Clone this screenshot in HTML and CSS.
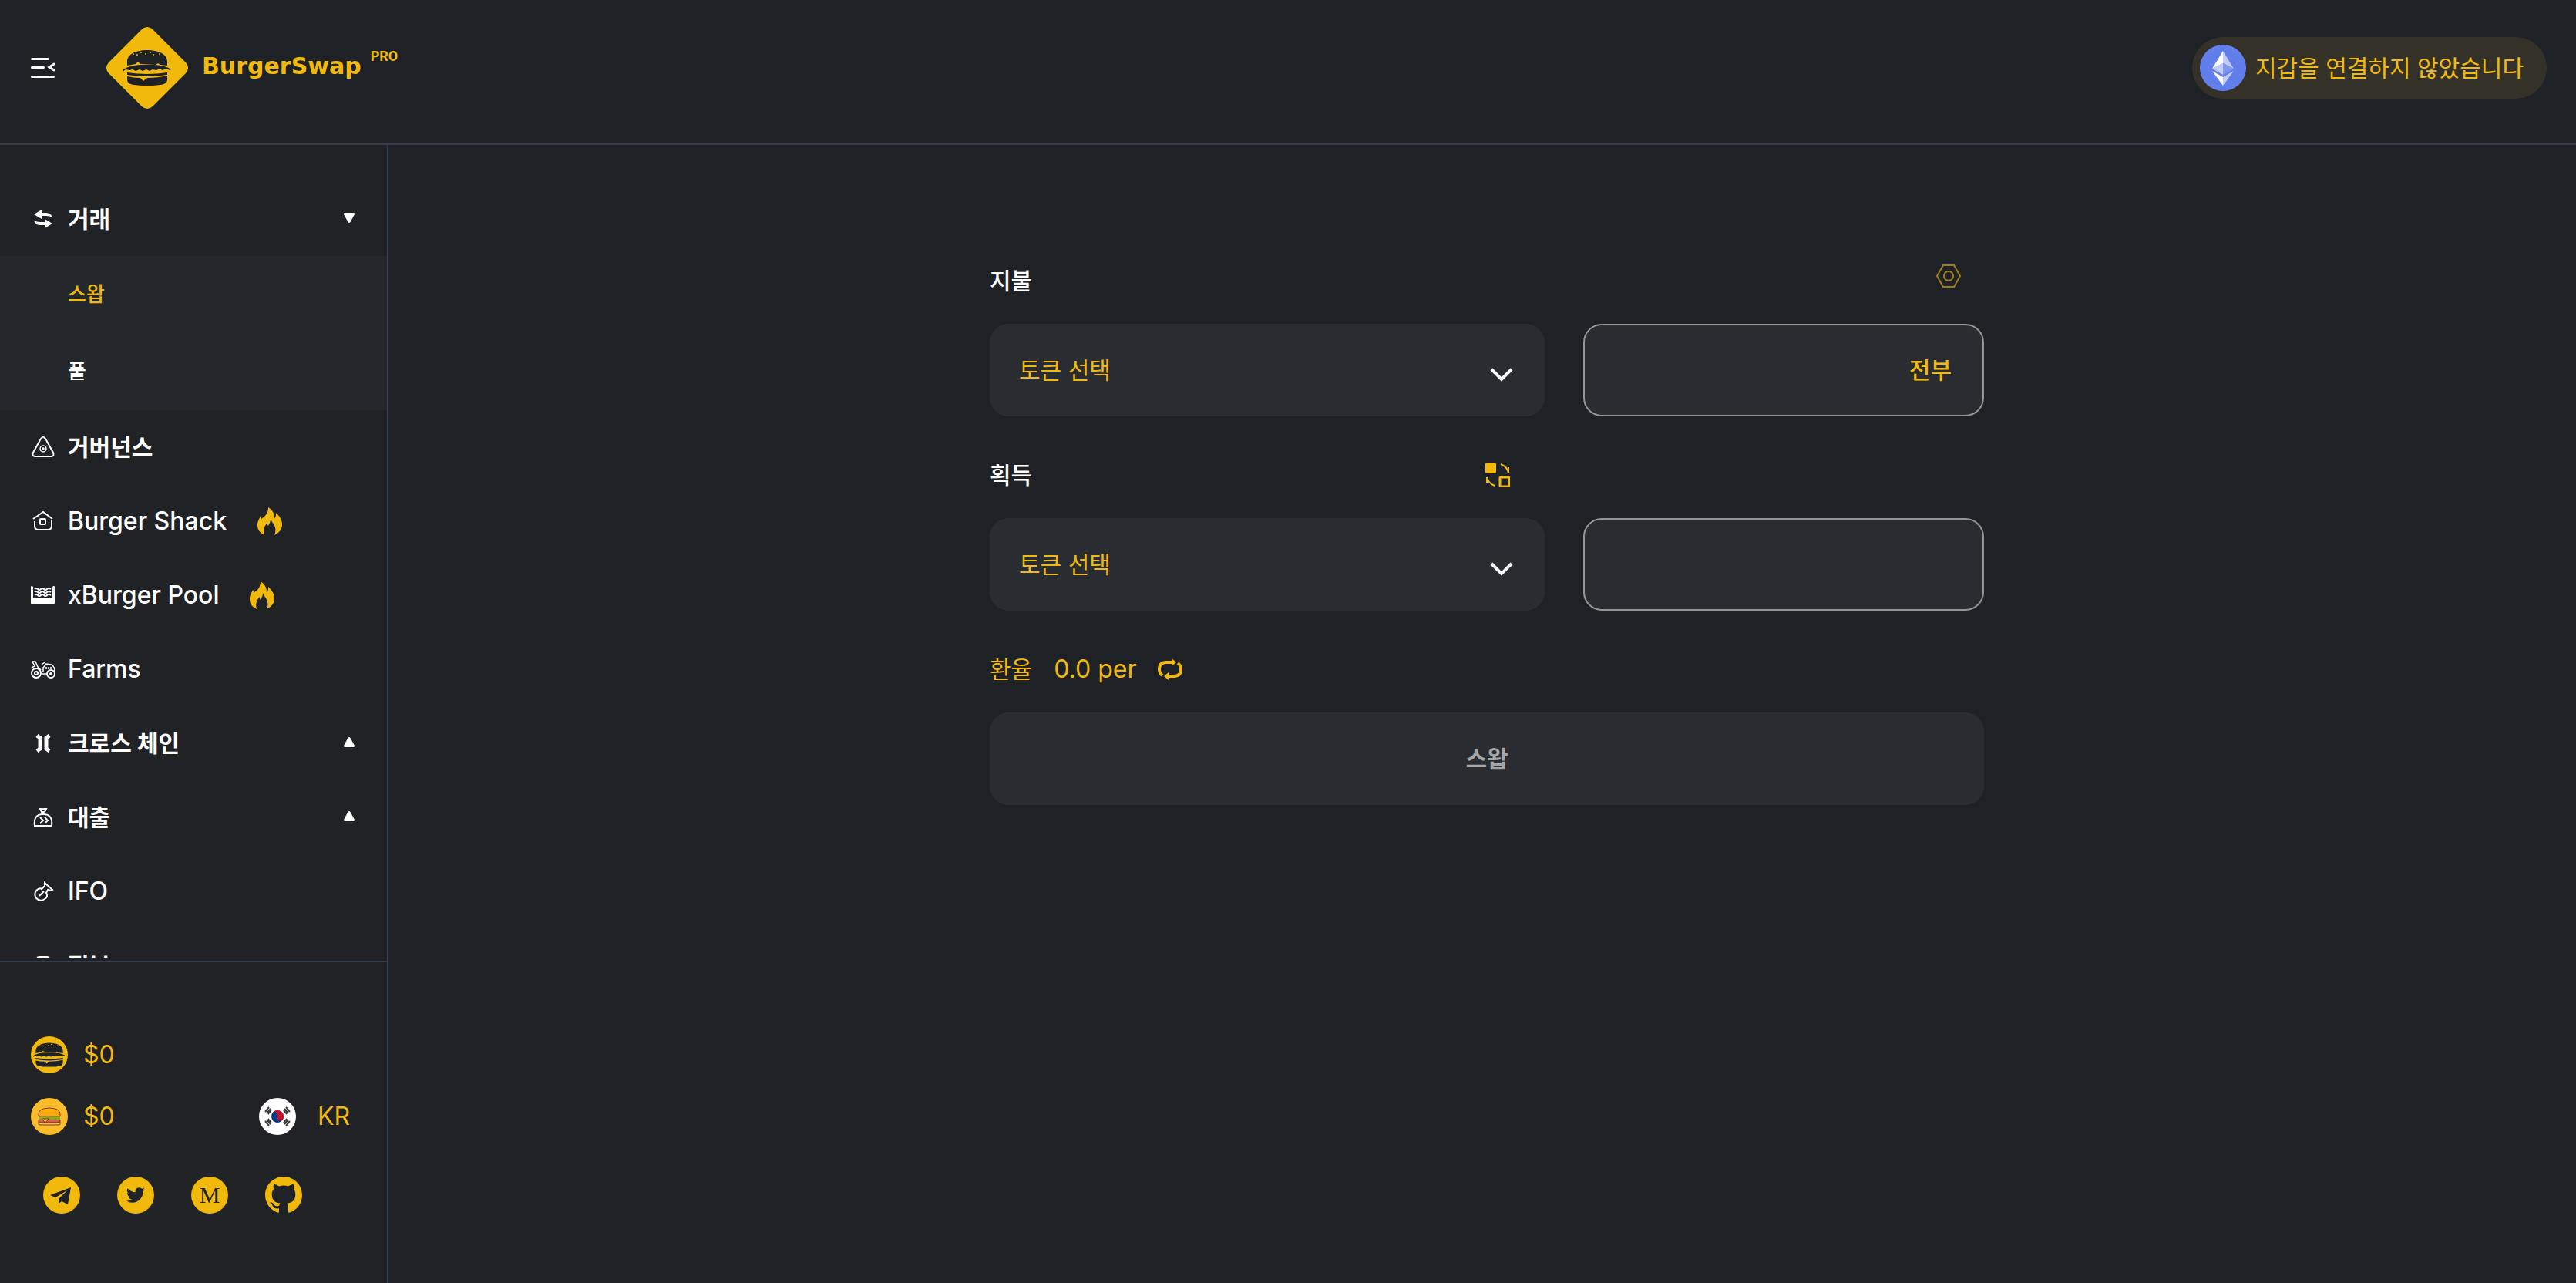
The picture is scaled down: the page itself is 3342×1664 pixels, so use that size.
FILE: index.html
```
<!DOCTYPE html>
<html lang="ko">

<head>
    <meta charset="UTF-8">
    <meta name="viewport" content="width=device-width, initial-scale=1.0">
    <title>BurgerSwap</title>
    <link rel="stylesheet" href="styles.css">
</head>

<body>
    <!-- 공용 심볼 -->
    <svg class="symbols" aria-hidden="true">
        <symbol id="burger" viewBox="0 0 62 46">
            <path d="M5 20V15C5 5 17 0 31 0s26 5 26 15v5l-9-1-3-2-3 2-20-1-3-3-3 3z" />
            <path d="M0 25c10-6 20-6 31-6s22 0 31 6l-2 1-4-2-5 2-4-2-4 2-5-1-4 2-4-2-5 2-4-2-5 2-4-2-4 1-5-1-4 3z" />
            <path d="M5 29q26 4 52 0v3q-26 4-52 0z" />
            <path d="M5 34q8 2 17 2l4 4 5-4q14 0 26-3v5c0 6-6 8-26 8S5 44 5 38z" />
            <g class="seeds">
                <circle cx="13" cy="5" r="1" />
                <circle cx="18" cy="6" r="1" />
                <circle cx="23" cy="3" r="1" />
                <circle cx="29" cy="5" r="1" />
                <circle cx="35" cy="3" r="1" />
                <circle cx="39" cy="6" r="1" />
                <circle cx="47" cy="5" r="1" />
            </g>
        </symbol>
        <symbol id="fire" viewBox="0 0 32 36">
            <path d="M14 0c6 4 8 8 8 14 2-1 2-4 2-7 5 5 8 9 8 15 0 7-4 11-10 14 3-7 1-12-3-17l-2-4c0 4-1 5-3 9-1-1-1-2-1-4-4 4-6 9-4 16C3 33 0 29 0 23c0-5 2-7 4-12 1 1 1 2 1 4C11 11 14 7 14 0z" />
        </symbol>
        <symbol id="arrow" viewBox="0 0 14 13">
            <path d="M1 0h12q1 0 1 2L8.500 12q-1.500 2-3 0L0 2Q0 0 1 0z" />
        </symbol>
        <symbol id="chevron" viewBox="0 0 30 18">
            <path d="M2 2l13 13L28 2" />
        </symbol>
    </svg>

    <header class="header">
        <button class="fold" aria-label="메뉴 접기">
            <svg viewBox="0 0 32 28" width="32" height="28">
                <path d="M1.500 2.500h21M1.500 13.500h15M1.500 25.500h28M30 9l-6 4 6 4" />
            </svg>
        </button>
        <a class="logo" href="#">
            <svg viewBox="0 0 106 106" width="106" height="106">
                <path class="diamond" d="M46 3q7-6 14 0l43 43q6 7 0 14l-43 43q-7 6-14 0L3 60q-6-7 0-14z" />
                <use href="#burger" x="22" y="30" width="62" height="46" />
            </svg>
            <span class="name">BurgerSwap</span>
            <sup class="pro">PRO</sup>
        </a>
        <button class="wallet">
            <svg viewBox="0 0 60 60" width="60" height="60">
                <circle cx="30" cy="30" r="30" fill="#627eea" />
                <path d="M30 8L16 31l14-7z" fill="#fff" />
                <path d="M30 8l14 23-14-7z" fill="#c1ccf7" />
                <path d="M16 31l14-7v15z" fill="#c1ccf7" />
                <path d="M44 31l-14-7v15z" fill="#8298ee" />
                <path d="M16 34l14 8v11z" fill="#fff" />
                <path d="M44 34l-14 8v11z" fill="#c1ccf7" />
            </svg>
            <span>지갑을 연결하지 않았습니다</span>
        </button>
    </header>

    <div class="container">
        <aside class="sidebar">
            <nav class="menu">
                <ul>
                    <li>
                        <a class="item" href="#">
                            <svg class="icon solid" viewBox="0 0 32 32">
                                <path d="M4 10l10-6v4h6q6 0 8 6-4-2-8-2h-6v4zM28 22l-10 6v-4h-6q-6 0-8-6 4 2 8 2h6v-4z" />
                            </svg>
                            <span>거래</span>
                            <svg class="arrow"><use href="#arrow" /></svg>
                        </a>
                        <ul class="sub">
                            <li class="current"><a href="#">스왑</a></li>
                            <li><a href="#">풀</a></li>
                        </ul>
                    </li>
                    <li>
                        <a class="item" href="#">
                            <svg class="icon" viewBox="0 0 32 32">
                                <path d="M13 5q3-4 6 0l10 18q2 5-3 5H6q-5 0-3-5z" />
                                <circle class="thin" cx="16" cy="18" r="4" />
                                <circle class="thin" cx="16" cy="18" r="1" />
                            </svg>
                            <span>거버넌스</span>
                        </a>
                    </li>
                    <li>
                        <a class="item en" href="#">
                            <svg class="icon" viewBox="0 0 32 32">
                                <path d="M3 13l13-9 12 9M5 16v6q0 5 5 5h12q5 0 5-5v-8" />
                                <rect x="12" y="13" width="7" height="7" rx="1" />
                            </svg>
                            <span>Burger Shack</span>
                            <svg class="fire"><use href="#fire" /></svg>
                        </a>
                    </li>
                    <li>
                        <a class="item en" href="#">
                            <svg class="icon" viewBox="0 0 32 32">
                                <path class="solid" d="M0 5q0-1 1-1t2 1v15h25V5q1-1 2-1t1 1v21q0 2-1 2H1q-1 0-1-2z" />
                                <path d="M5 8q2-2 4 0t4 0 4 0 4 0 5 0M5 12q2-2 4 0t4 0 4 0 4 0 5 0M5 16q2-2 4 0t4 0 4 0 4 0 5 0" />
                            </svg>
                            <span>xBurger Pool</span>
                            <svg class="fire"><use href="#fire" /></svg>
                        </a>
                    </li>
                    <li>
                        <a class="item en" href="#">
                            <svg class="icon" viewBox="0 0 32 32">
                                <circle cx="7" cy="21" r="6" />
                                <circle cx="7" cy="21" r="2" />
                                <circle cx="26" cy="22" r="5" />
                                <circle cx="26" cy="22" r="1" />
                                <path class="thin" d="M1 14l4-2-3-6h4l3 7 4 4M14 10l4-3M16 19v-5l4-5 7 1q4 3 4 9M14 22h7M20 13v3M23 13v3M26 13v3" />
                            </svg>
                            <span>Farms</span>
                        </a>
                    </li>
                    <li>
                        <a class="item" href="#">
                            <svg class="icon thick" viewBox="0 0 32 32">
                                <path d="M8 6l4 3v14l-4 3M24 6l-4 3v14l4 3" />
                            </svg>
                            <span>크로스 체인</span>
                            <svg class="arrow up"><use href="#arrow" /></svg>
                        </a>
                    </li>
                    <li>
                        <a class="item" href="#">
                            <svg class="icon" viewBox="0 0 32 32">
                                <path d="M12 5h8l-2 4h-4zM5 27q-2-15 11-15t11 15zM12 16l4 4-4 4M18 16l4 4-4 4" />
                            </svg>
                            <span>대출</span>
                            <svg class="arrow up"><use href="#arrow" /></svg>
                        </a>
                    </li>
                    <li>
                        <a class="item en" href="#">
                            <svg class="icon" viewBox="0 0 32 32">
                                <path d="M18 5l10 9-2 1-4-1-2 4q3 5-2 8-6 4-11-1-4-6 1-11 4-3 6-1l4-4zM11 22l6-6" />
                            </svg>
                            <span>IFO</span>
                        </a>
                    </li>
                    <li>
                        <a class="item" href="#">
                            <svg class="icon" viewBox="0 0 32 32">
                                <rect x="8" y="5" width="16" height="22" rx="3" />
                            </svg>
                            <span>정보</span>
                        </a>
                    </li>
                </ul>
            </nav>

            <div class="info">
                <div class="price">
                    <svg viewBox="0 0 48 48" width="48" height="48">
                        <circle class="gold" cx="24" cy="24" r="24" />
                        <use href="#burger" x="3" y="8" width="42" height="32" />
                    </svg>
                    <span>$0</span>
                </div>
                <div class="price">
                    <svg viewBox="0 0 48 48" width="48" height="48">
                        <circle cx="24" cy="24" r="24" fill="#fbbd2c" />
                        <g stroke="#7a3d10">
                            <path d="M10 24q-2-11 14-11t14 11z" fill="#fbab10" />
                            <path d="M10 28h28v4H10z" fill="#e2574c" />
                            <path d="M10 32h28q1 3-2 3H12q-3 0-2-3z" fill="#fbbd5c" />
                        </g>
                        <path d="M10 25h28v2l-3 2-3-2-4 1-4-1-4 1-5-1-3 1z" fill="#7cb518" />
                        <path d="M14 27h9l-4 5z" fill="#fdc23e" stroke="#7a3d10" />
                    </svg>
                    <span>$0</span>
                    <button class="lang">
                        <svg viewBox="0 0 48 48" width="48" height="48">
                            <circle cx="24" cy="24" r="24" fill="#fff" />
                            <g transform="rotate(20 24 24)">
                                <circle cx="24" cy="24" r="8" fill="#0b3b80" />
                                <path d="M16 24a8 8 0 0 1 16 0a4 4 0 0 1-8 0a4 4 0 0 0-8 0z" fill="#c8102e" />
                            </g>
                            <g stroke="#3c3c3c" stroke-width="2">
                                <path d="M8 18l5-6M10 20l5-6M12 21l4-6" />
                                <path d="M33 14l5 6M35 12l5 6M32 16l4 5" />
                                <path d="M8 30l5 6M10 28l5 6M12 27l4 6" />
                                <path d="M40 30l-5 6M38 28l-5 6M36 27l-4 5" />
                            </g>
                        </svg>
                        <span>KR</span>
                    </button>
                </div>
                <div class="links">
                    <a href="#" aria-label="Telegram">
                        <svg viewBox="0 0 48 48" width="48" height="48">
                            <circle class="gold" cx="24" cy="24" r="24" />
                            <path class="dark" d="M36 14L9 24l7 3 15-9-11 11v6l4-3 8 4z" />
                        </svg>
                    </a>
                    <a href="#" aria-label="Twitter">
                        <svg viewBox="0 0 48 48" width="48" height="48">
                            <circle class="gold" cx="24" cy="24" r="24" />
                            <path class="dark" transform="translate(12 12)" d="M23.950 4.570a10 10 0 0 1-2.820.770 4.960 4.960 0 0 0 2.160-2.720c-.95.550-2 .95-3.130 1.180a4.920 4.920 0 0 0-8.380 4.480C7.690 8.090 4.070 6.130 1.640 3.160a4.920 4.920 0 0 0 1.520 6.570 4.900 4.900 0 0 1-2.230-.61v.06a4.920 4.920 0 0 0 3.950 4.830 5 5 0 0 1-2.210.08 4.940 4.940 0 0 0 4.600 3.420A9.870 9.870 0 0 1 0 19.540a14 14 0 0 0 7.550 2.210c9.050 0 14-7.500 14-13.980l-.02-.63a9.940 9.940 0 0 0 2.420-2.570z" />
                        </svg>
                    </a>
                    <a class="medium" href="#" aria-label="Medium">M</a>
                    <a href="#" aria-label="GitHub">
                        <svg class="gold" viewBox="0 0 24 24" width="48" height="48">
                            <path d="M12 0C5.370 0 0 5.370 0 12c0 5.310 3.440 9.800 8.210 11.390.6.110.79-.26.79-.58v-2.230c-3.340.73-4.030-1.420-4.030-1.420-.55-1.390-1.330-1.760-1.330-1.760-1.090-.74.08-.73.08-.73 1.210.09 1.840 1.240 1.840 1.240 1.070 1.830 2.810 1.300 3.500 1 .1-.78.420-1.310.76-1.610-2.670-.3-5.470-1.330-5.470-5.930 0-1.310.47-2.380 1.240-3.220-.14-.3-.54-1.520.1-3.180 0 0 1.010-.32 3.300 1.230a11.500 11.500 0 0 1 6.020 0c2.280-1.550 3.290-1.230 3.290-1.230.64 1.660.24 2.880.12 3.180.77.84 1.230 1.910 1.230 3.220 0 4.610-2.800 5.630-5.480 5.920.42.360.81 1.100.81 2.220v3.290c0 .32.190.69.800.58A12 12 0 0 0 24 12c0-6.630-5.370-12-12-12z" />
                        </svg>
                    </a>
                </div>
            </div>
        </aside>

        <main class="main">
            <form class="swap">
                <div class="label">
                    <label for="pay">지불</label>
                    <button class="setting" type="button" aria-label="설정">
                        <svg viewBox="0 0 32 30" width="32" height="30">
                            <path d="M9 1h14l8 14-8 14H9L1 15z" />
                            <circle cx="16" cy="15" r="6" />
                        </svg>
                    </button>
                </div>
                <div class="row">
                    <div class="select">
                        <select id="pay">
                            <option>토큰 선택</option>
                        </select>
                        <svg class="chevron"><use href="#chevron" /></svg>
                    </div>
                    <div class="amount">
                        <input type="text" aria-label="지불 수량">
                        <button type="button">전부</button>
                    </div>
                </div>
                <div class="label">
                    <label for="get">획득</label>
                    <button class="exchange" type="button" aria-label="전환">
                        <svg viewBox="0 0 32 32" width="32" height="32">
                            <rect class="solid" width="14" height="14" rx="2" />
                            <rect x="19" y="19" width="12" height="12" rx="1" />
                            <path class="thin" d="M20 2q8 3 10 11V6M12 30Q4 27 2 19v7" />
                        </svg>
                    </button>
                </div>
                <div class="row">
                    <div class="select">
                        <select id="get">
                            <option>토큰 선택</option>
                        </select>
                        <svg class="chevron"><use href="#chevron" /></svg>
                    </div>
                    <div class="amount">
                        <input type="text" aria-label="획득 수량">
                    </div>
                </div>
                <div class="rate">
                    <span>환율</span>
                    <span class="en">0.0 per</span>
                    <button type="button" aria-label="새로고침">
                        <svg viewBox="0 0 32 28" width="32" height="28">
                            <path d="M6 22Q2 19 2 14 2 5 11 5h8M26 6q4 3 4 8 0 9-9 9h-8" />
                            <path class="solid" d="M18 0l6 5-6 5zM14 18l-6 5 6 5z" />
                        </svg>
                    </button>
                </div>
                <button class="submit" type="button">스왑</button>
            </form>
        </main>
    </div>
</body>

</html>
```
FILE: styles.css
```
* {
    margin: 0;
    padding: 0;
    box-sizing: border-box;
}

body {
    display: flex;
    flex-direction: column;
    height: 100vh;
    background-color: #1e2126;
    color: #fff;
    font-family: Inter, "Noto Sans CJK KR", sans-serif;
    font-size: 30px;
    line-height: 40px;
}

ul {
    list-style: none;
}

a {
    color: inherit;
    text-decoration: none;
}

button,
input,
select {
    border: none;
    background: none;
    color: inherit;
    font: inherit;
}

button {
    cursor: pointer;
}

svg {
    display: block;
    flex: none;
}

.symbols {
    position: absolute;
    width: 0;
    height: 0;
}

#burger {
    fill: #1e2126;
}

.seeds,
.gold {
    fill: #f0b90b;
}

.dark {
    fill: #1e2126;
}

/* 헤더 */
.header {
    display: flex;
    align-items: center;
    height: 188px;
    padding: 0 38px 10px 40px;
    border-bottom: 2px solid #343e4e;
}

.fold svg {
    fill: none;
    stroke: #fff;
    stroke-width: 3;
    stroke-linecap: round;
}

.logo {
    display: flex;
    align-items: center;
    margin-left: 66px;
    color: #f0b90b;
    font-weight: 700;
}

.diamond {
    fill: #f0b90b;
}

.name {
    margin-left: 18px;
    padding-bottom: 4px;
    font-family: "DejaVu Sans", sans-serif;
    font-size: 30px;
}

.pro {
    align-self: flex-start;
    margin: 18px 0 0 12px;
    font-family: Roboto, sans-serif;
    font-size: 18px;
}

.wallet {
    display: flex;
    align-items: center;
    gap: 12px;
    height: 80px;
    margin-left: auto;
    padding: 0 30px 0 10px;
    border-radius: 40px;
    background-color: #343129;
    color: #f0b90b;
}

.container {
    display: flex;
    flex: 1;
    min-height: 0;
}

/* 侧边栏 */
.sidebar {
    display: flex;
    flex-direction: column;
    width: 504px;
    border-right: 2px solid #343e4e;
    background-color: #212226;
}

.menu {
    flex: 1;
    min-height: 0;
    margin-bottom: 4px;
    padding-top: 48px;
    overflow: hidden;
}

.item {
    display: flex;
    align-items: center;
    height: 96px;
    padding: 0 42px 0 40px;
    font-weight: 700;
}

.item span {
    margin-left: 16px;
}

.en {
    font-size: 32px;
    font-weight: 500;
}

.icon {
    width: 32px;
    height: 32px;
    fill: none;
    stroke: #fff;
    stroke-width: 2;
}

.icon .thin {
    stroke-width: 1.5;
}

.solid {
    fill: #fff;
    stroke: none;
}

.thick {
    stroke-width: 5;
}

.arrow {
    width: 14px;
    height: 13px;
    margin: 0 0 4px auto;
    fill: #fff;
}

.up {
    transform: rotate(180deg);
}

.fire {
    width: 32px;
    height: 36px;
    margin-left: 40px;
    fill: #f0b90b;
}

.sub {
    background-color: #24282c;
    font-size: 26px;
    font-weight: 500;
}

.sub a {
    display: block;
    padding-left: 88px;
    line-height: 100px;
}

.sub .current {
    color: #f0b90b;
}

.info {
    display: flex;
    flex-direction: column;
    gap: 32px;
    padding: 96px 48px 90px 40px;
    border-top: 2px solid #343e4e;
    color: #f0b90b;
    font-size: 32px;
}

.price,
.lang {
    display: flex;
    align-items: center;
    gap: 20px;
}

.lang {
    gap: 28px;
    margin-left: auto;
}

.links {
    display: flex;
    gap: 48px;
    margin-top: 22px;
    padding-left: 16px;
}

.medium {
    width: 48px;
    height: 48px;
    border-radius: 50%;
    background-color: #f0b90b;
    color: #1e2126;
    font-family: "Liberation Serif", serif;
    font-size: 30px;
    line-height: 48px;
    text-align: center;
}

/* 스왑 */
.main {
    flex: 1;
    padding: 146px 0 0 12px;
}

.swap {
    max-width: 1290px;
    margin: 0 auto;
}

.label {
    display: flex;
    align-items: center;
    height: 60px;
    margin-bottom: 26px;
    font-weight: 500;
}

.setting {
    margin: 0 30px 12px auto;
}

.setting svg {
    fill: none;
    stroke: #a07e1a;
    stroke-width: 2;
}

.exchange {
    margin-left: 588px;
}

.exchange svg,
.rate svg {
    fill: none;
    stroke: #f0b90b;
    stroke-width: 3;
}

.rate svg {
    stroke-width: 4;
}

.exchange .thin {
    stroke-width: 2;
}

.exchange .solid,
.rate .solid {
    fill: #f0b90b;
    stroke: none;
}

.row {
    display: grid;
    grid-template-columns: minmax(0, 72fr) minmax(0, 52fr);
    gap: 50px;
    margin-bottom: 46px;
}

.select {
    display: grid;
    align-items: center;
}

.select select,
.chevron {
    grid-area: 1 / 1;
}

.select select {
    width: 100%;
    height: 120px;
    padding: 0 38px;
    border-radius: 24px;
    background-color: #292c31;
    color: #f0b90b;
    appearance: none;
}

.chevron {
    justify-self: end;
    width: 30px;
    height: 18px;
    margin: 12px 41px 0 0;
    fill: none;
    stroke: #fff;
    stroke-width: 4;
    pointer-events: none;
}

.amount {
    display: flex;
    height: 120px;
    border: 2px solid #949596;
    border-radius: 24px;
    background-color: #292c31;
}

.amount input {
    flex: 1;
    min-width: 0;
    padding-left: 40px;
    outline: none;
}

.amount button {
    padding: 0 40px;
    color: #f0b90b;
    font-weight: 500;
}

.rate {
    display: flex;
    align-items: center;
    gap: 28px;
    height: 60px;
    margin-bottom: 26px;
    color: #f0b90b;
}

.rate .en {
    font-weight: 400;
}

.submit {
    width: 100%;
    height: 120px;
    border-radius: 24px;
    background-color: #292c31;
    color: #a5a6a8;
    font-weight: 700;
}
```
